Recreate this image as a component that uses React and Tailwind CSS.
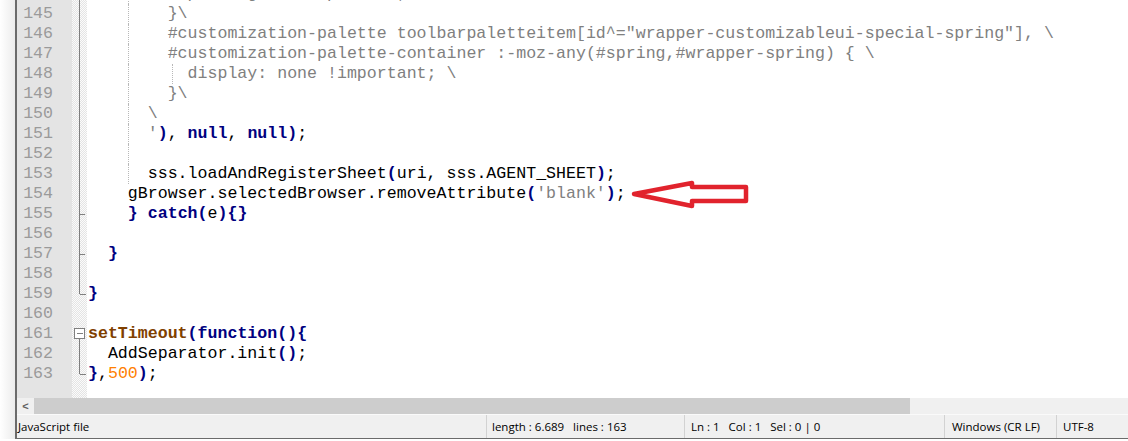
import React from 'react';

// token styles used by the editor lexer colours
const tokenClass = {
  t: 'text-black',
  s: 'text-[#808080]',
  o: 'text-[#000080] font-bold',
  k: 'text-[#000080] font-bold',
  f: 'text-[#804000] font-bold',
  n: 'text-[#ff8000]',
};

const codeLines = [
  { n: 144, tokens: [['          padding: 0 !important; \\', 's']], guides: [40] },
  { n: 145, tokens: [['        }\\', 's']], guides: [40] },
  { n: 146, tokens: [['        #customization-palette toolbarpaletteitem[id^="wrapper-customizableui-special-spring"], \\', 's']], guides: [40] },
  { n: 147, tokens: [['        #customization-palette-container :-moz-any(#spring,#wrapper-spring) { \\', 's']], guides: [40] },
  { n: 148, tokens: [['          display: none !important; \\', 's']], guides: [40, 84] },
  { n: 149, tokens: [['        }\\', 's']], guides: [40] },
  { n: 150, tokens: [['      \\', 's']], guides: [40] },
  { n: 151, tokens: [['      \'', 's'], [')', 'o'], [', ', 't'], ['null', 'k'], [', ', 't'], ['null', 'k'], [')', 'o'], [';', 't']], guides: [40] },
  { n: 152, tokens: [], guides: [40] },
  { n: 153, tokens: [['      sss.loadAndRegisterSheet', 't'], ['(', 'o'], ['uri, sss.AGENT_SHEET', 't'], [')', 'o'], [';', 't']], guides: [40] },
  { n: 154, tokens: [['    gBrowser.selectedBrowser.removeAttribute', 't'], ['(', 'o'], ["'blank'", 's'], [')', 'o'], [';', 't']] },
  { n: 155, tokens: [['    ', 't'], ['}', 'o'], [' ', 't'], ['catch', 'k'], ['(', 'o'], ['e', 't'], ['){}', 'o']] },
  { n: 156, tokens: [] },
  { n: 157, tokens: [['  ', 't'], ['}', 'o']] },
  { n: 158, tokens: [] },
  { n: 159, tokens: [['}', 'o']] },
  { n: 160, tokens: [] },
  { n: 161, tokens: [['setTimeout', 'f'], ['(', 'o'], ['function', 'k'], ['(){', 'o']] },
  { n: 162, tokens: [['  AddSeparator.init', 't'], ['()', 'o'], [';', 't']] },
  { n: 163, tokens: [['}', 'o'], [',', 't'], ['500', 'n'], [')', 'o'], [';', 't']] },
];

function FoldMargin() {
  // centre of row for line 145 is at y=14, 20px per row
  const c = (line) => 14 + 20 * (line - 145);
  return (
    <svg width="15" height="398" className="block">
      <g stroke="#808080" strokeWidth="1" fill="none" shapeRendering="crispEdges">
        <line x1="7.5" y1="0" x2="7.5" y2={c(159)} />
        <line x1="7.5" y1={c(155)} x2="13" y2={c(155)} />
        <line x1="7.5" y1={c(157)} x2="13" y2={c(157)} />
        <line x1="7.5" y1={c(159)} x2="14" y2={c(159)} />
        <rect x="2.5" y={c(161) - 5.5} width="10" height="10" fill="#ffffff" />
        <line x1="4.5" y1={c(161) - 0.5} x2="10.5" y2={c(161) - 0.5} />
        <line x1="7.5" y1={c(161) + 4.5} x2="7.5" y2={c(163)} />
        <line x1="7.5" y1={c(163)} x2="14" y2={c(163)} />
      </g>
    </svg>
  );
}

function StatusCell({ className, children }) {
  return (
    <div className={`h-full flex items-center border-r border-[#d2d2d2] whitespace-pre ${className}`}>
      {children}
    </div>
  );
}

export default function App() {
  return (
    <div className="w-[1128px] h-[441px] bg-white flex overflow-hidden relative">
      <div className="w-[15px] h-[439px] bg-gradient-to-r from-white to-[#ececec]" />
      <div className="flex-1 h-[439px] border-l-2 border-b border-[#6b6b6b] flex flex-col">
        {/* editor */}
        <div className="h-[398px] flex overflow-hidden font-['Liberation_Mono',monospace] text-[16.6px]">
          <div className="w-[55px] bg-[#e4e4e4] text-[#9a9a9a] pr-[19px] text-right">
            <div className="-mt-[16px]">
              {codeLines.map((l) => (
                <div key={l.n} className="h-[20px] leading-[20px]">{l.n}</div>
              ))}
            </div>
          </div>
          <div className="w-[15px] bg-[repeating-conic-gradient(#e4e4e4_0%_25%,#fbfbfb_0%_50%)] bg-[length:2px_2px]">
            <FoldMargin />
          </div>
          <div className="flex-1 pl-[1px]">
            <div className="-mt-[16px]">
              {codeLines.map((l) => (
                <div key={l.n} className="h-[20px] leading-[20px] whitespace-pre relative">
                  {(l.guides || []).map((g) => (
                    <span key={g} className="absolute top-0 h-[20px] border-l border-dotted border-[#b8b8b8]" style={{ left: g }} />
                  ))}
                  {l.tokens.map(([text, kind], i) => (
                    <span key={i} className={tokenClass[kind]}>{text}</span>
                  ))}
                </div>
              ))}
            </div>
          </div>
        </div>

        {/* horizontal scrollbar */}
        <div className="h-[16px] flex bg-[#f0f0f0]">
          <div className="w-[17px] flex items-center justify-center text-[#606060] text-[11px] font-['Liberation_Sans',sans-serif] font-bold">
            &lt;
          </div>
          <div className="w-[876px] bg-[#cdcdcd]" />
          <div className="flex-1" />
        </div>

        {/* status bar */}
        <div className="flex-1 flex bg-[#f0f0f0] border-t border-[#fafafa] font-['Open_Sans',sans-serif] text-[11.5px] text-black">
          <StatusCell className="w-[470px] pl-[1px]">JavaScript file</StatusCell>
          <StatusCell className="w-[198px] pl-[5px]">{'length : 6.689   lines : 163'}</StatusCell>
          <StatusCell className="w-[260px] pl-[6px]">{'Ln : 1   Col : 1   Sel : 0 | 0'}</StatusCell>
          <StatusCell className="w-[112px] pl-[7px]">Windows (CR LF)</StatusCell>
          <div className="flex-1 h-full flex items-center pl-[6px]">UTF-8</div>
        </div>
      </div>

      {/* red annotation arrow */}
      <svg className="absolute left-[629px] top-[178px]" width="124" height="32">
        <polygon
          points="5,16 63,5 63,9 117,9 117,23 63,23 63,28"
          fill="none"
          stroke="#e1232d"
          strokeWidth="4.5"
          strokeLinejoin="round"
        />
      </svg>
    </div>
  );
}
